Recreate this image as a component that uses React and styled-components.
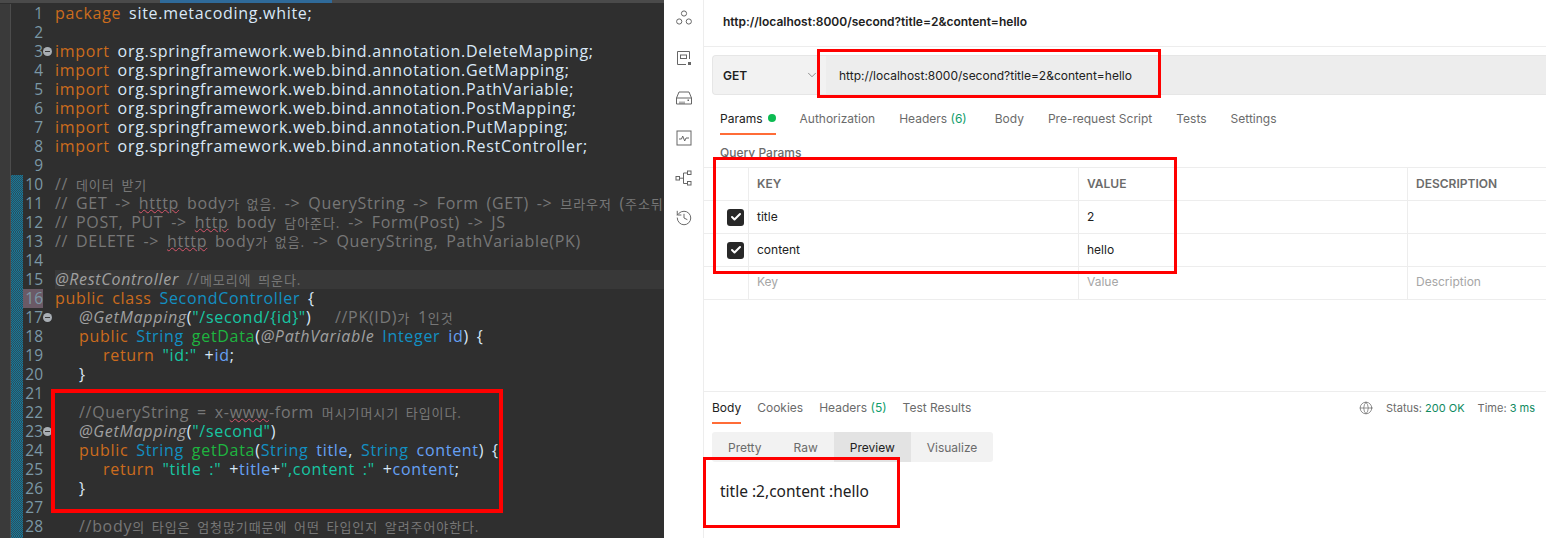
import styled, {createGlobalStyle} from 'styled-components'
import {Check, ChevronDown, Globe, History} from 'lucide-react'

const GlobalStyle = createGlobalStyle`
  html, body {
    margin: 0;
    background: #fff;
    overflow: hidden;
  }
`

const Kw = styled.span`color: #cc6c1d;`
const Txt = styled.span`color: #d9e8f7;`
const Cm = styled.span`color: #777;`
const Ann = styled.span`color: #a0a0a0; font-style: italic;`
const Str = styled.span`color: #17c6a3;`
const Type = styled.span`color: #1290c3;`
const Fn = styled.span`color: #1eb540;`
const Field = styled.span`color: #66a1f5;`
const Warn = styled.span`text-decoration: underline wavy #d8556b 1px; text-underline-offset: 0;`
const Ko = styled.span`
  font-family: "Noto Sans CJK KR", sans-serif;
  font-size: 13px;
  letter-spacing: 0.9px;
`

const importLine = name => <><Kw>import</Kw><Txt> org.springframework.web.bind.annotation.{name};</Txt></>

const LINES = [
    {code: <><Kw>package</Kw><Txt> site.metacoding.white;</Txt></>},
    {},
    {code: importLine('DeleteMapping'), fold: true},
    {code: importLine('GetMapping')},
    {code: importLine('PathVariable')},
    {code: importLine('PostMapping')},
    {code: importLine('PutMapping')},
    {code: importLine('RestController')},
    {},
    {code: <Cm>// <Ko>데이터 받기</Ko></Cm>},
    {code: <Cm>// GET -&gt; <Warn>htttp</Warn> body<Ko>가 없음.</Ko> -&gt; QueryString -&gt; Form (GET) -&gt; <Ko>브라우저</Ko> (<Ko>주소뒤</Ko></Cm>},
    {code: <Cm>// POST, PUT -&gt; <Warn>http</Warn> body <Ko>담아준다.</Ko> -&gt; Form(Post) -&gt; JS</Cm>},
    {code: <Cm>// DELETE -&gt; <Warn>htttp</Warn> body<Ko>가 없음.</Ko> -&gt; QueryString, PathVariable(PK)</Cm>},
    {},
    {code: <><Ann>@RestController</Ann> <Cm>//<Ko>메모리에 띄운다.</Ko></Cm></>, current: true},
    {code: <><Kw>public class</Kw> <Type>SecondController</Type> <Txt>{'{'}</Txt></>, selected: true},
    {code: <><Ann>@GetMapping</Ann><Txt>(</Txt><Str>"/second/{'{'}id{'}'}"</Str><Txt>)</Txt>   <Cm>//PK(ID)<Ko>가</Ko> 1<Ko>인것</Ko></Cm></>, depth: 1, fold: true},
    {code: <><Kw>public</Kw> <Type>String</Type> <Fn>getData</Fn><Txt>(</Txt><Ann>@PathVariable</Ann> <Type>Integer</Type> <Field>id</Field><Txt>) {'{'}</Txt></>, depth: 1},
    {code: <><Kw>return</Kw> <Str>"id:"</Str> <Txt>+</Txt><Field>id</Field><Txt>;</Txt></>, depth: 2},
    {code: <Txt>{'}'}</Txt>, depth: 1},
    {},
    {code: <Cm>//QueryString = x-<Warn>www</Warn>-form <Ko>머시기머시기 타입이다.</Ko></Cm>, depth: 1},
    {code: <><Ann>@GetMapping</Ann><Txt>(</Txt><Str>"/second"</Str><Txt>)</Txt></>, depth: 1, fold: true},
    {code: <><Kw>public</Kw> <Type>String</Type> <Fn>getData</Fn><Txt>(</Txt><Type>String</Type> <Field>title</Field><Txt>,</Txt> <Type>String</Type> <Field>content</Field><Txt>) {'{'}</Txt></>, depth: 1},
    {code: <><Kw>return</Kw> <Str>"title :"</Str> <Txt>+</Txt><Field>title</Field><Txt>+</Txt><Str>",content :"</Str> <Txt>+</Txt><Field>content</Field><Txt>;</Txt></>, depth: 2},
    {code: <Txt>{'}'}</Txt>, depth: 1},
    {},
    {code: <Cm>//body<Ko>의 타입은 엄청많기때문에 어떤 타입인지 알려주어야한다.</Ko></Cm>, depth: 1},
]

const REQUEST_TABS = ['Authorization', 'Headers', 'Body', 'Pre-request Script', 'Tests', 'Settings']
const PARAMS = [['title', '2'], ['content', 'hello']]

function CollectionsIcon() {
    return <SideSvg viewBox="0 0 18 18"><circle cx="9" cy="4.5" r="2.6"/><circle cx="4.2" cy="12.5" r="2.6"/><circle cx="13.8" cy="12.5" r="2.6"/></SideSvg>
}

function ApiIcon() {
    return <SideSvg viewBox="0 0 18 18"><path d="M14.5 10V2.5h-12v13H11"/><rect x="5.5" y="6" width="6" height="3.5"/><rect x="13" y="13" width="3" height="3" fill="#666" stroke="none"/></SideSvg>
}

function MockIcon() {
    return <SideSvg viewBox="0 0 18 18"><path d="M1.5 9 4 3h10l2.500 6v6h-15zM1.500 9h15"/><path d="M5 12.500v2.500M7 12.500v2.500M9 12.500v2.500"/><rect x="12.500" y="10.500" width="1.500" height="1.500" fill="#666" stroke="none"/></SideSvg>
}

function MonitorIcon() {
    return <SideSvg viewBox="0 0 18 18"><rect x="2" y="2" width="14" height="14"/><path d="M4 10h2.500l1.200-3 2 5 1.300-3h3"/></SideSvg>
}

function FlowsIcon() {
    return <SideSvg viewBox="0 0 18 18"><rect x="1" y="7.500" width="3.500" height="3.500"/><rect x="12.500" y="2" width="3.500" height="3.500"/><rect x="12.500" y="12.500" width="3.500" height="3.500"/><path d="M4.500 9.200h4M8.500 4v10.500M8.500 4h4M8.500 14.500h4"/></SideSvg>
}

export default function App() {
    return (
        <Page>
            <GlobalStyle/>
            <Editor>
                <EditorTop><ActiveTab/></EditorTop>
                <EditorBody>
                    <LeftRail/>
                    <Lines>
                        {LINES.map((line, i) => (
                            <Row key={i}>
                                <ChangeMark $on={i >= 9}/>
                                <LineNo $selected={line.selected}>{i + 1}</LineNo>
                                <FoldSlot>{line.fold && <FoldDot/>}</FoldSlot>
                                <Code $current={line.current} $depth={line.depth || 0}>{line.code}</Code>
                            </Row>
                        ))}
                        <TailRow><ChangeMark $on/></TailRow>
                    </Lines>
                </EditorBody>
            </Editor>

            <Postman>
                <Sidebar>
                    <CollectionsIcon/>
                    <ApiIcon/>
                    <MockIcon/>
                    <MonitorIcon/>
                    <FlowsIcon/>
                    <History size={18} color="#666" strokeWidth={1.3}/>
                </Sidebar>
                <Main>
                    <RequestPane>
                        <TopBar>http://localhost:8000/second?title=2&amp;content=hello</TopBar>
                        <RequestBar>
                            <Method>GET<ChevronDown size={14} color="#666" strokeWidth={1.2}/></Method>
                            <UrlInput>http://localhost:8000/second?title=2&amp;content=hello</UrlInput>
                        </RequestBar>
                        <RequestTabs>
                            <Tab $active>Params<GreenDot/></Tab>
                            {REQUEST_TABS.map(name => (
                                <Tab key={name} $wide={name === 'Headers'}>
                                    {name}{name === 'Headers' && <Count> (6)</Count>}
                                </Tab>
                            ))}
                        </RequestTabs>
                        <QueryTitle>Query Params</QueryTitle>
                        <ParamTable>
                            <TableRow>
                                <CheckCell/>
                                <HeadCell>KEY</HeadCell>
                                <HeadCell>VALUE</HeadCell>
                                <HeadCell>DESCRIPTION</HeadCell>
                            </TableRow>
                            {PARAMS.map(([key, value]) => (
                                <TableRow key={key}>
                                    <CheckCell><CheckBox><Check size={12} color="#fff" strokeWidth={4}/></CheckBox></CheckCell>
                                    <Cell>{key}</Cell>
                                    <Cell>{value}</Cell>
                                    <Cell/>
                                </TableRow>
                            ))}
                            <TableRow>
                                <CheckCell/>
                                <Cell $ghost>Key</Cell>
                                <Cell $ghost>Value</Cell>
                                <Cell $ghost>Description</Cell>
                            </TableRow>
                        </ParamTable>
                    </RequestPane>

                    <ResponsePane>
                        <ResponseHead>
                            <ResponseTabs>
                                <ResponseTab $active>Body</ResponseTab>
                                <ResponseTab>Cookies</ResponseTab>
                                <ResponseTab>Headers<Count> (5)</Count></ResponseTab>
                                <ResponseTab>Test Results</ResponseTab>
                            </ResponseTabs>
                            <StatusBar>
                                <Globe size={14} color="#666" strokeWidth={1.2}/>
                                <StatusItem>Status: <b>200 OK</b></StatusItem>
                                <StatusItem>Time: <b>3 ms</b></StatusItem>
                            </StatusBar>
                        </ResponseHead>
                        <ViewSwitch>
                            <ViewItem>Pretty</ViewItem>
                            <ViewItem>Raw</ViewItem>
                            <ViewItem $active>Preview</ViewItem>
                            <ViewItem>Visualize</ViewItem>
                        </ViewSwitch>
                        <Preview>title :2,content :hello</Preview>
                    </ResponsePane>
                </Main>
            </Postman>

            <CodeMark/>
            <UrlMark/>
            <TableMark/>
            <ResultMark/>
        </Page>
    )
}

const Page = styled.div`
  position: relative;
  display: flex;
  width: 1546px;
  height: 538px;
  overflow: hidden;
  font-family: Inter, "Noto Sans", sans-serif;
`

const Editor = styled.div`
  width: 664px;
  flex: none;
  display: flex;
  flex-direction: column;
  background: #2f2f2f;
  overflow: hidden;
`

const EditorTop = styled.div`
  height: 4px;
  flex: none;
  background: #2f2f2f;
  border-top: 3px solid #4a4a4a;
  box-sizing: border-box;
  padding-left: 160px;
`

const ActiveTab = styled.div`
  width: 172px;
  height: 3px;
  margin-top: -3px;
  background: #2f6a9a;
`

const EditorBody = styled.div`
  display: flex;
  flex: 1;
  min-height: 0;
`

const LeftRail = styled.div`
  width: 10px;
  flex: none;
  background: #3a3a3a;
  border-right: 1px solid #4c4c4c;
`

const Lines = styled.div`
  flex: 1;
  min-width: 0;
`

const Row = styled.div`
  display: flex;
  height: 19px;
  font-family: "Open Sans", "Noto Sans", sans-serif;
  font-size: 16px;
  line-height: 18px;
  white-space: pre;
`

const TailRow = styled.div`
  display: flex;
  height: 3px;
`

const ChangeMark = styled.div`
  width: 12px;
  flex: none;
  background: ${({$on}) => $on ? 'repeating-conic-gradient(#17789a 0 25%, #2a4f5c 0 50%) 0 0 / 2px 2px' : 'transparent'};
`

const LineNo = styled.div`
  width: 20px;
  flex: none;
  text-align: right;
  font-size: 15.500px;
  color: #7b98a6;
  background: ${({$selected}) => $selected ? '#6b5a66' : 'transparent'};
`

const FoldSlot = styled.div`
  width: 12px;
  flex: none;
  display: flex;
  align-items: center;
`

const FoldDot = styled.div`
  position: relative;
  width: 9px;
  height: 9px;
  border-radius: 50%;
  background: #a8aeb4;

  &::after {
    content: "";
    position: absolute;
    left: 2px;
    right: 2px;
    top: 4px;
    height: 1px;
    background: #3a3a3a;
  }
`

const Code = styled.div`
  flex: 1;
  min-width: 0;
  letter-spacing: 0.7px;
  word-spacing: 3px;
  padding-left: ${({$depth}) => $depth * 24}px;
  background: ${({$current}) => $current ? '#383838' : 'transparent'};
`

const Postman = styled.div`
  flex: 1;
  min-width: 0;
  display: flex;
  background: #fff;
  color: #212121;
  font-size: 12px;
`

const Sidebar = styled.div`
  width: 40px;
  flex: none;
  display: flex;
  flex-direction: column;
  align-items: center;
  gap: 22px;
  padding-top: 9px;
  box-sizing: border-box;
  border-right: 1px solid #ededed;
`

const SideSvg = styled.svg`
  width: 18px;
  height: 18px;
  flex: none;
  fill: none;
  stroke: #666;
  stroke-width: 1;
`

const Main = styled.div`
  flex: 1;
  min-width: 0;
  display: flex;
  flex-direction: column;
`

const RequestPane = styled.div`
  flex: 1;
  min-height: 0;
`

const TopBar = styled.div`
  height: 47px;
  padding-left: 19px;
  padding-bottom: 3px;
  display: flex;
  align-items: center;
  box-sizing: border-box;
  font-weight: 600;
  border-bottom: 1px solid #ededed;
`

const RequestBar = styled.div`
  display: flex;
  height: 40px;
  margin: 8px 0 0 8px;
`

const Method = styled.div`
  width: 114px;
  flex: none;
  display: flex;
  align-items: center;
  justify-content: space-between;
  padding: 0 7px 0 10px;
  box-sizing: border-box;
  font-weight: 600;
  background: #f2f2f2;
  border: 1px solid #e6e6e6;
  border-right: 0;
  border-radius: 4px 0 0 4px;
`

const UrlInput = styled.div`
  flex: 1;
  display: flex;
  align-items: center;
  padding-left: 13px;
  background: #ededed;
  border-top: 1px solid #e6e6e6;
  border-bottom: 1px solid #e6e6e6;
`

const RequestTabs = styled.div`
  display: flex;
  gap: 24px;
  height: 40px;
  margin-left: 16px;
`

const ResponseTabs = styled.div`
  display: flex;
  gap: 16px;
`

const Tab = styled.div`
  display: flex;
  align-items: center;
  white-space: pre;
  height: 40px;
  padding-top: 8px;
  box-sizing: border-box;
  margin-right: ${({$wide}) => $wide ? '4px' : '0'};
  color: ${({$active}) => $active ? '#212121' : '#6b6b6b'};
  border-bottom: 2px solid ${({$active}) => $active ? '#ff6c37' : 'transparent'};
`

const ResponseTab = styled(Tab)`
  height: 32px;
  padding-top: 1px;
`

const GreenDot = styled.span`
  width: 8px;
  height: 8px;
  margin-left: 5px;
  border-radius: 50%;
  background: #0cbb52;
`

const Count = styled.span`
  color: #0f9d6b;
`

const QueryTitle = styled.div`
  height: 32px;
  margin-left: 16px;
  line-height: 35px;
  font-weight: 500;
  color: #6b6b6b;
`

const ParamTable = styled.div`
  border-top: 1px solid #ededed;
`

const TableRow = styled.div`
  display: grid;
  grid-template-columns: 44px 330px 329px 1fr;
  height: 33px;
  box-sizing: border-box;
  border-bottom: 1px solid #ededed;
`

const CheckCell = styled.div`
  display: flex;
  align-items: center;
  padding-left: 23px;
`

const CheckBox = styled.div`
  width: 17px;
  height: 17px;
  display: flex;
  align-items: center;
  justify-content: center;
  border-radius: 3px;
  background: #282828;
`

const Cell = styled.div`
  display: flex;
  align-items: center;
  padding: 0 0 ${({$ghost}) => $ghost ? 4 : 2}px 8px;
  border-left: 1px solid #ededed;
  color: ${({$ghost}) => $ghost ? '#a6a6a6' : '#212121'};
`

const HeadCell = styled(Cell)`
  font-weight: 600;
  color: #6b6b6b;
`

const ResponsePane = styled.div`
  height: 147px;
  flex: none;
  box-sizing: border-box;
  border-top: 1px solid #ededed;
  padding-left: 8px;
`

const ResponseHead = styled.div`
  display: flex;
  justify-content: space-between;
  height: 33px;
  padding-right: 11px;
`

const StatusBar = styled.div`
  display: flex;
  align-items: center;
  gap: 13px;
  height: 32px;
  font-size: 11px;
  color: #6b6b6b;
`

const StatusItem = styled.span`
  b {
    font-weight: 400;
    color: #0f8a5f;
  }
`

const ViewSwitch = styled.div`
  display: inline-flex;
  height: 30px;
  margin-top: 7px;
  border-radius: 3px;
  overflow: hidden;
  background: #f2f2f2;
`

const ViewItem = styled.div`
  display: flex;
  align-items: center;
  padding: 0 16px;
  color: ${({$active}) => $active ? '#212121' : '#6b6b6b'};
  background: ${({$active}) => $active ? '#e3e3e3' : 'transparent'};
`

const Preview = styled.div`
  margin: 18px 0 0 8px;
  font-family: "Noto Sans", sans-serif;
  font-size: 15.500px;
  color: #212121;
`

const RedBox = styled.div`
  position: absolute;
  box-sizing: border-box;
  border: 3px solid #f00;
  pointer-events: none;
`

const CodeMark = styled(RedBox)`
  left: 51px;
  top: 389px;
  width: 452px;
  height: 124px;
  border-width: 4px;
`

const UrlMark = styled(RedBox)`
  left: 817px;
  top: 49px;
  width: 344px;
  height: 49px;
`

const TableMark = styled(RedBox)`
  left: 713px;
  top: 157px;
  width: 464px;
  height: 117px;
`

const ResultMark = styled(RedBox)`
  left: 703px;
  top: 457px;
  width: 197px;
  height: 71px;
`
